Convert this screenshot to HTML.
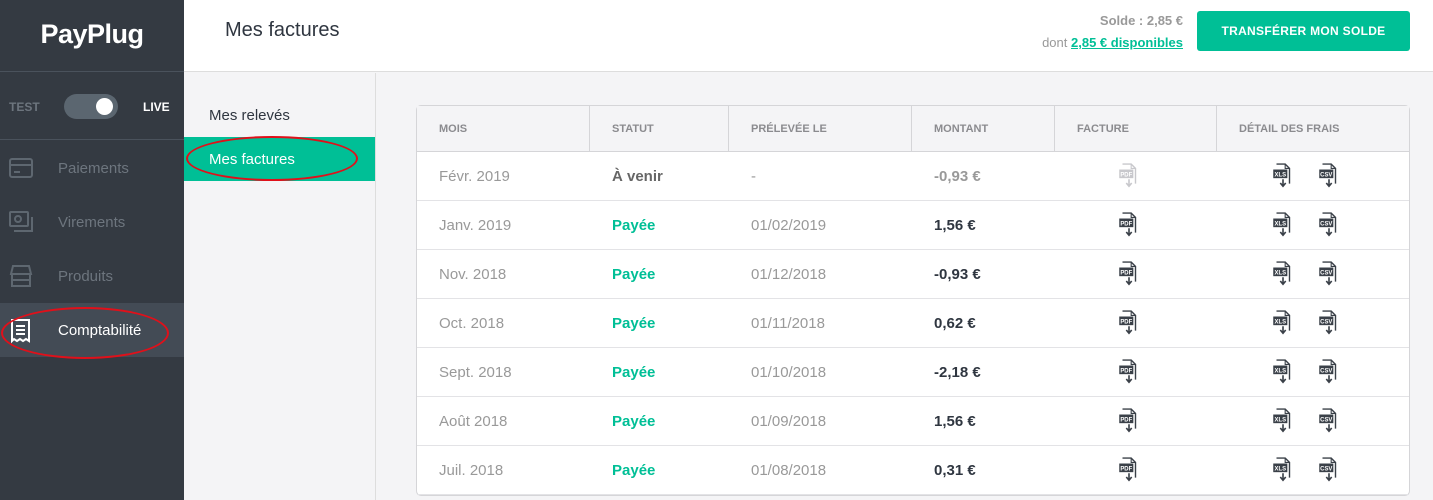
<!DOCTYPE html>
<html><head><meta charset="utf-8"><style>
*{box-sizing:border-box;margin:0;padding:0}
html{width:1433px;height:500px;overflow:hidden}
body{width:1433px;height:500px;overflow:hidden;font-family:"Liberation Sans",sans-serif;background:#f4f4f6;position:relative}
.sb{position:absolute;left:0;top:0;width:184px;height:500px;background:#343a42}
.logo{height:72px;border-bottom:1px solid #4a525c;color:#fff;font-size:27px;font-weight:bold;text-align:center;line-height:68px;letter-spacing:-0.5px}
.tg{height:68px;border-bottom:1px solid #4a525c;position:relative;font-size:12px;font-weight:bold}
.tg .t{position:absolute;left:9px;top:28px;color:#6d757e}
.tg .l{position:absolute;left:143px;top:28px;color:#fff}
.tg .sw{position:absolute;left:64px;top:22px;width:54px;height:25px;border-radius:13px;background:#5b6670}
.tg .sw:after{content:"";position:absolute;right:5px;top:4px;width:17px;height:17px;border-radius:50%;background:#fff}
.nav{position:absolute;left:0;width:184px;height:54px;color:#6d757e;font-size:15px;line-height:56px;padding-left:58px}
.nav svg{position:absolute;left:8px;top:15px}
.nav.a{background:#434b55;color:#fff}
.hd{position:absolute;left:184px;top:0;width:1249px;height:72px;background:#fff;border-bottom:1px solid #ddd}
.hd h1{position:absolute;left:41px;top:19px;font-size:20px;font-weight:normal;color:#2f3640}
.bal{position:absolute;right:250px;top:10px;text-align:right;font-size:13px;color:#999;line-height:22px}
.bal b{color:#999}
.bal u{color:#00bf96;font-weight:bold;text-decoration:underline}
.btn{position:absolute;left:1197px;top:11px;width:213px;height:40px;background:#00bf96;border-radius:3px;color:#fff;font-size:12px;font-weight:bold;text-align:center;line-height:41px;letter-spacing:.3px}
.sub{position:absolute;left:184px;top:73px;width:192px;height:427px;border-right:1px solid #ddd}
.sub div{height:44px;line-height:46px;padding-left:25px;font-size:15px;color:#2f3640}
.sub .a{background:#00bf96;color:#fff}
.ell{position:absolute;border:2px solid #e0101a;border-radius:50%}
table{position:absolute;left:416px;top:105px;width:994px;border-collapse:separate;border-spacing:0;border:1px solid #d5d5d8;border-radius:5px;background:#fff;font-size:15px}
th{height:46px;background:#f4f4f6;font-size:11px;color:#8b8b8f;text-align:left;padding-left:22px;border-right:1px solid #d5d5d8;border-bottom:1px solid #d5d5d8;font-weight:bold}
th:last-child{border-right:none}
td{height:49px;padding-left:22px;border-bottom:1px solid #e3e3e6;color:#999}
td.s{color:#00bf96;font-weight:bold}
td.m{color:#2f3640;font-weight:bold}
td.i{padding-left:0}
.ic{display:inline-block;vertical-align:middle}
</style></head><body>
<div class="sb">
<div class="logo">PayPlug</div>
<div class="tg"><span class="t">TEST</span><span class="sw"></span><span class="l">LIVE</span></div>
<div class="nav" style="top:141px"><svg width="26" height="24"><rect x="2" y="3" width="22" height="18" rx="2" fill="none" stroke="#5e6770" stroke-width="2"/><line x1="2" y1="9" x2="24" y2="9" stroke="#5e6770" stroke-width="2"/><line x1="6" y1="16" x2="12" y2="16" stroke="#5e6770" stroke-width="2"/></svg>Paiements</div>
<div class="nav" style="top:195px"><svg width="26" height="24"><rect x="2" y="2" width="18" height="14" rx="1" fill="none" stroke="#5e6770" stroke-width="2"/><circle cx="10" cy="9" r="3" fill="none" stroke="#5e6770" stroke-width="2"/><path d="M24 7v14H6" fill="none" stroke="#5e6770" stroke-width="2"/></svg>Virements</div>
<div class="nav" style="top:249px"><svg width="26" height="24"><path d="M3 10L5 2h16l2 8zM4 10v12h18V10M4 16h18" fill="none" stroke="#5e6770" stroke-width="2"/></svg>Produits</div>
<div class="nav a" style="top:303px"><svg width="26" height="26"><path d="M4 2h17v21l-3-2-3 2-3-2-3 2-3-2-2 2z" fill="none" stroke="#fff" stroke-width="2"/><path d="M8 8h9M8 12h9M8 16h9" stroke="#fff" stroke-width="2"/></svg>Comptabilité</div>
</div>
<div class="ell" style="left:1px;top:307px;width:168px;height:52px"></div>
<div class="hd"><h1>Mes factures</h1>
<div class="bal"><b>Solde : 2,85 €</b><br>dont <u>2,85 € disponibles</u></div></div>
<div class="btn">TRANSFÉRER MON SOLDE</div>
<div class="sub"><div style="margin-top:20px">Mes relevés</div><div class="a">Mes factures</div></div>
<div class="ell" style="left:186px;top:136px;width:172px;height:45px"></div>
<table>
<tr><th style="width:173px">MOIS</th><th style="width:139px">STATUT</th><th style="width:183px">PRÉLEVÉE LE</th><th style="width:143px">MONTANT</th><th style="width:162px">FACTURE</th><th>DÉTAIL DES FRAIS</th></tr>
</table>
<script>
var d=[["Févr. 2019","À venir","-","-0,93 €",1],["Janv. 2019","Payée","01/02/2019","1,56 €"],["Nov. 2018","Payée","01/12/2018","-0,93 €"],["Oct. 2018","Payée","01/11/2018","0,62 €"],["Sept. 2018","Payée","01/10/2018","-2,18 €"],["Août 2018","Payée","01/09/2018","1,56 €"],["Juil. 2018","Payée","01/08/2018","0,31 €"]];
function ic(t,c){return '<svg class="ic" width="20" height="26" viewBox="0 0 18 24"><path d="M3 1h8l4 4v14" fill="none" stroke="'+c+'" stroke-width="1.3"/><path d="M11 1v4h4" fill="none" stroke="'+c+'" stroke-width="1"/><rect x="0" y="6" width="13" height="8" fill="'+c+'"/><text x="6.5" y="12.5" font-size="5.5" fill="#fff" text-anchor="middle" font-family="Liberation Sans" font-weight="bold">'+t+'</text><path d="M9 15v6M6.5 18.5L9 21.5l2.5-3" fill="none" stroke="'+c+'" stroke-width="1.5"/></svg>'}
var t=document.querySelector('table'),h='';
d.forEach(function(r){var f=r[4];h+='<tr><td>'+r[0]+'</td><td class="s" style="'+(f?'color:#666':'')+'">'+r[1]+'</td><td>'+r[2]+'</td><td class="m" style="'+(f?'color:#999':'')+'">'+r[3]+'</td><td class="i" style="padding-left:64px">'+ic('PDF',f?'#c8c8cc':'#3a4048')+'</td><td class="i" style="padding-left:56px">'+ic('XLS','#3a4048')+'<span style="display:inline-block;width:26px"></span>'+ic('CSV','#3a4048')+'</td></tr>'});
t.insertAdjacentHTML('beforeend',h);
</script>
</body></html>
